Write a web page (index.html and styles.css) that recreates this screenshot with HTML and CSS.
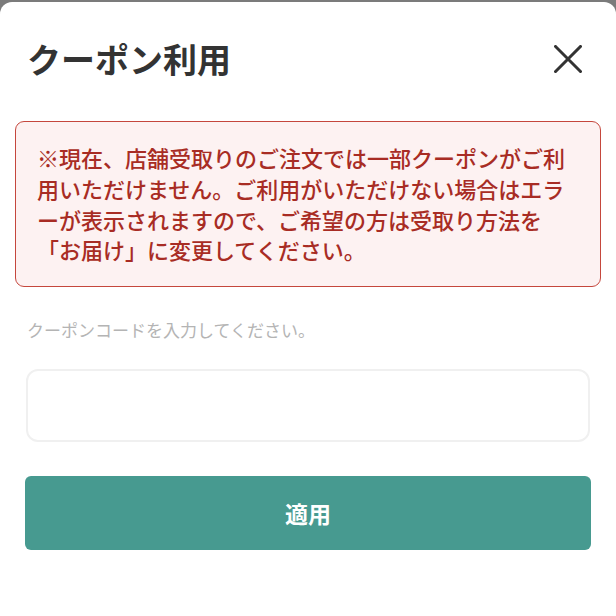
FILE: index.html
```html
<!DOCTYPE html>
<html lang="ja">

<head>
  <meta charset="UTF-8">
  <meta name="viewport" content="width=device-width, initial-scale=1.0">
  <title>クーポン利用</title>
  <link rel="stylesheet" href="styles.css">
</head>

<body>
  <div class="sheet">
    <div class="sheet-head">
      <h1>クーポン利用</h1>
      <button class="close" aria-label="閉じる">
        <svg width="28" height="28" viewBox="0 0 28 28">
          <path d="M1.5 1.5 L26.5 26.5 M26.5 1.5 L1.5 26.5" stroke="#333" stroke-width="3" stroke-linecap="square" fill="none" />
        </svg>
      </button>
    </div>
    <p class="notice">※現在、店舗受取りのご注文では一部クーポンがご利用いただけません。ご利用がいただけない場合はエラーが表示されますので、ご希望の方は受取り方法を「お届け」に変更してください。</p>
    <label class="label" for="code">クーポンコードを入力してください。</label>
    <input class="code" id="code" type="text">
    <button class="apply">適用</button>
  </div>
</body>

</html>
```

FILE: styles.css
```css
* {
  margin: 0;
  padding: 0;
  box-sizing: border-box;
}

body {
  background: #7b7b7b;
  font-family: "Noto Sans CJK JP", "Noto Sans", sans-serif;
  height: 616px;
  overflow: hidden;
}

.sheet {
  margin-top: 2px;
  height: 614px;
  background: #fff;
  border-radius: 12px 12px 0 0;
  padding: 0 26px;
  display: flex;
  flex-direction: column;
}

.sheet-head {
  display: flex;
  justify-content: space-between;
  align-items: center;
  padding-top: 35px;
  margin-bottom: 40px;
}

.sheet-head h1 {
  font-size: 34px;
  line-height: 42px;
  font-weight: 700;
  color: #333;
  margin-left: 1px;
}

.close {
  width: 44px;
  height: 44px;
  border: none;
  background: none;
  display: flex;
  justify-content: center;
  align-items: center;
}

.notice {
  margin: 0 -11px;
  padding: 20px 21px 21px;
  border: 1px solid #c5473d;
  border-radius: 9px;
  background: #fdf2f2;
  color: #a82c24;
  font-size: 22px;
  font-weight: 500;
  line-height: 1.4;
  line-break: normal;
}

.label {
  margin-top: 30px;
  font-size: 17px;
  line-height: 26px;
  color: #b4b4b4;
  margin-left: 1px;
}

.code {
  margin-top: 26px;
  height: 73px;
  border: 2px solid #f0f0f0;
  border-radius: 12px;
  outline: none;
  font-size: 18px;
  padding: 0 16px;
}

.apply {
  margin: 34px -1px 0;
  height: 74px;
  border: none;
  border-radius: 6px;
  background: #479a90;
  color: #fff;
  font-family: inherit;
  font-size: 23px;
  font-weight: 700;
}
```
